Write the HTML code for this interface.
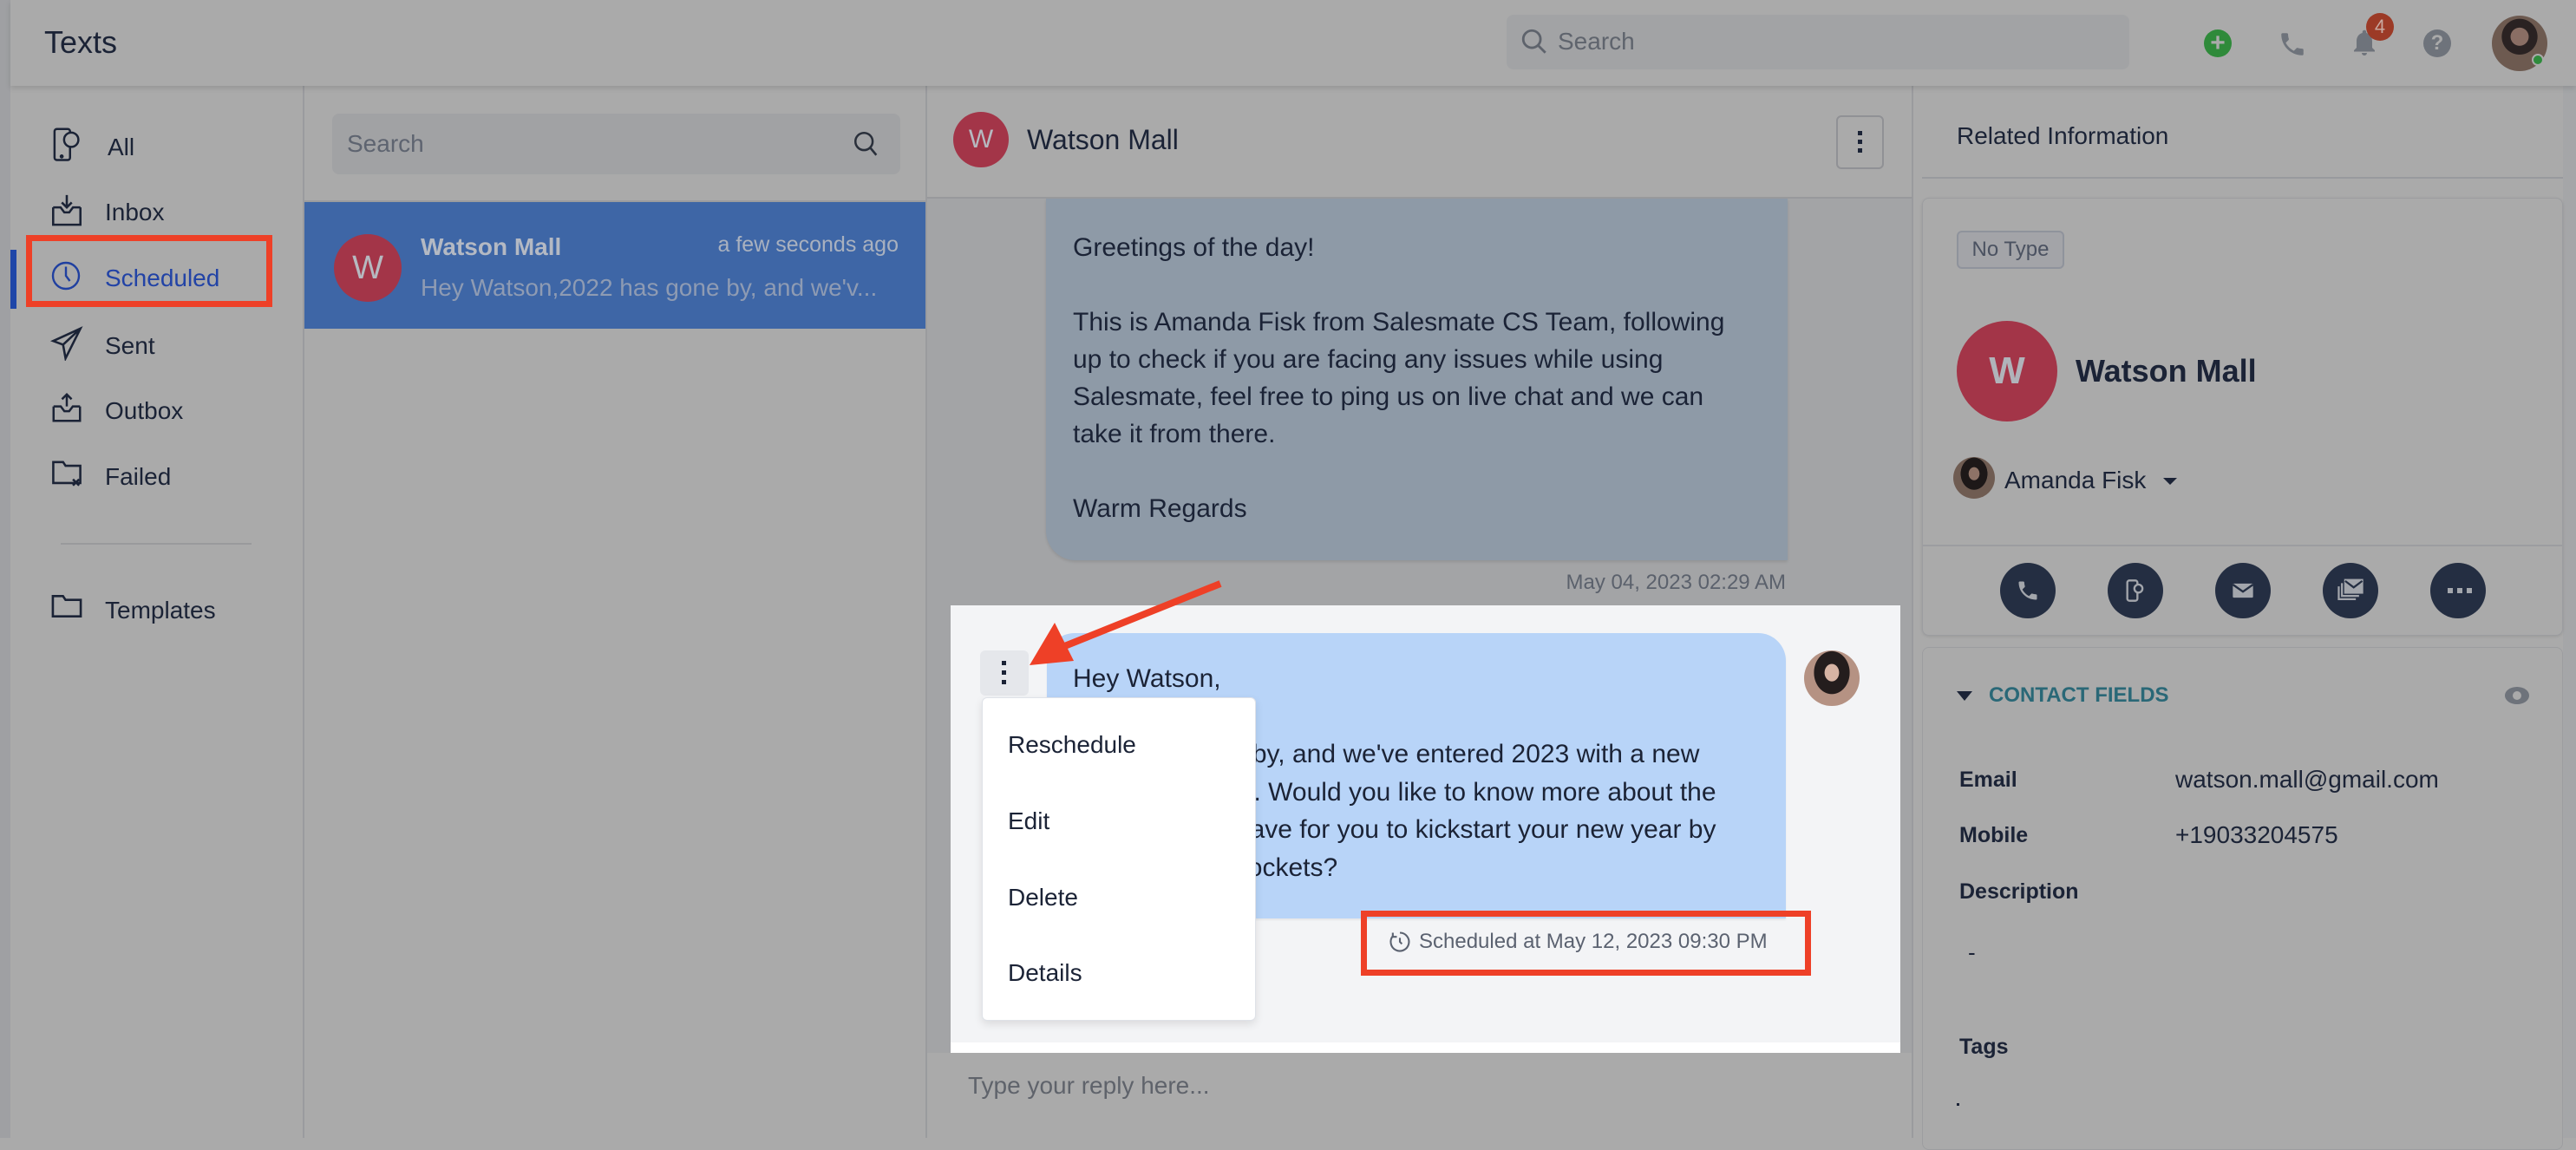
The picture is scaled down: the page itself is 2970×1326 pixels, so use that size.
<!DOCTYPE html>
<html><head><meta charset="utf-8"><style>
*{margin:0;padding:0;box-sizing:border-box}
body{width:2970px;height:1312px;overflow:hidden;background:#aaaaaa;font-family:"Liberation Sans",sans-serif;color:#1b2336;position:relative}
.a{position:absolute}
.t{position:absolute;white-space:nowrap;line-height:1}
</style></head><body>
<!-- left strip -->
<div class="a" style="left:0;top:0;width:12px;height:1312px;background:#9fa0a3"></div>
<!-- header -->
<div class="a" style="left:12px;top:0;width:2958px;height:99px;background:#aaaaaa;box-shadow:0 3px 6px rgba(0,0,0,.12);z-index:2"></div>
<div class="t" style="left:51px;top:31px;font-size:36px;z-index:3">Texts</div>
<div class="a" style="left:1737px;top:17px;width:718px;height:63px;background:#a2a3a5;border-radius:8px;z-index:3"></div>
<svg class="a" style="left:1752px;top:31px;z-index:4" width="34" height="34" viewBox="0 0 24 24" fill="none" stroke="#5e636c" stroke-width="2"><circle cx="10" cy="10" r="7"/><path d="M15 15l6 6"/></svg>
<div class="t" style="left:1796px;top:34px;font-size:28px;color:#5f646d;z-index:4">Search</div>
<div class="a" style="left:2541px;top:34px;width:32px;height:32px;border-radius:50%;background:#2f8a3a;z-index:4;color:#aaa;font-size:30px;line-height:32px;text-align:center;font-weight:bold">+</div>
<svg class="a" style="left:2626px;top:34px;z-index:4" width="34" height="34" viewBox="0 0 24 24"><path d="M6.6 10.8c1.4 2.8 3.8 5.1 6.6 6.6l2.2-2.2c.3-.3.7-.4 1-.2 1.1.4 2.3.6 3.6.6.6 0 1 .4 1 1V20c0 .6-.4 1-1 1C10.6 21 3 13.4 3 4c0-.6.4-1 1-1h3.5c.6 0 1 .4 1 1 0 1.2.2 2.4.6 3.6.1.3 0 .7-.2 1z" fill="#6e737b"/></svg>
<svg class="a" style="left:2708px;top:30px;z-index:4" width="36" height="38" viewBox="0 0 24 24"><path d="M12 22a2 2 0 002-2h-4a2 2 0 002 2zm6-6V11c0-3.1-1.6-5.6-4.5-6.3V4a1.5 1.5 0 00-3 0v.7C7.6 5.4 6 7.9 6 11v5l-2 2v1h16v-1z" fill="#6e737b"/></svg>
<div class="a" style="left:2728px;top:15px;width:32px;height:32px;border-radius:50%;background:#9c3a26;color:#c8a89f;font-size:22px;line-height:32px;text-align:center;z-index:5">4</div>
<div class="a" style="left:2794px;top:34px;width:32px;height:32px;border-radius:50%;background:#6e737b;color:#aaa;font-size:24px;line-height:32px;text-align:center;font-weight:bold;z-index:4">?</div>
<div class="a" style="left:2873px;top:18px;width:64px;height:64px;border-radius:50%;background:radial-gradient(circle at 50% 38%,#8a6e64 0 20%,#2a2222 21% 40%,#6d5a50 41%),#5a4a44;z-index:4"></div>
<div class="a" style="left:2919px;top:62px;width:14px;height:14px;border-radius:50%;background:#2e8b3c;border:2px solid #aaa;z-index:5"></div>

<!-- sidebar -->
<div class="a" style="left:349px;top:99px;width:2px;height:1213px;background:#9a9b9e"></div>
<div class="a" style="left:12px;top:288px;width:7px;height:68px;background:#1f46a8"></div>
<div class="a" style="left:30px;top:271px;width:284px;height:83px;border:7px solid #ee4027"></div>
<svg class="a" style="left:58px;top:146px" width="40" height="44" viewBox="0 0 28 32" fill="none" stroke="#1b2336" stroke-width="1.8"><rect x="3" y="2" width="13" height="26" rx="2"/><circle cx="17" cy="11" r="6" fill="#aaa"/><circle cx="9" cy="25" r=".8"/></svg>
<div class="t" style="left:124px;top:156px;font-size:28px">All</div>
<svg class="a" style="left:58px;top:222px" width="38" height="40" viewBox="0 0 26 28" fill="none" stroke="#1b2336" stroke-width="1.8"><path d="M2 12v14h22V12M2 12h6l3 4h4l3-4h6M13 2v10M9 8l4 4 4-4"/></svg>
<div class="t" style="left:121px;top:231px;font-size:28px">Inbox</div>
<svg class="a" style="left:58px;top:298px" width="36" height="40" viewBox="0 0 24 26" fill="none" stroke="#2040a0" stroke-width="1.6"><circle cx="12" cy="13" r="10"/><path d="M12 6v7l3 4"/></svg>
<div class="t" style="left:121px;top:307px;font-size:28px;color:#2243a6">Scheduled</div>
<svg class="a" style="left:58px;top:376px" width="38" height="40" viewBox="0 0 26 28" fill="none" stroke="#1b2336" stroke-width="1.8"><path d="M24 2L2 12l8 3 2 11zM10 15L24 2"/></svg>
<div class="t" style="left:121px;top:385px;font-size:28px">Sent</div>
<svg class="a" style="left:58px;top:452px" width="38" height="36" viewBox="0 0 26 26" fill="none" stroke="#1b2336" stroke-width="1.8"><path d="M2 12v12h22V12M2 12h6l3 4h4l3-4h6M13 12V2M9 6l4-4 4 4"/></svg>
<div class="t" style="left:121px;top:460px;font-size:28px">Outbox</div>
<svg class="a" style="left:58px;top:530px" width="38" height="34" viewBox="0 0 26 24" fill="none" stroke="#1b2336" stroke-width="1.8"><path d="M2 2h8l2 3h12v14H2zM18 16l5 5M23 16l-5 5"/></svg>
<div class="t" style="left:121px;top:536px;font-size:28px">Failed</div>
<div class="a" style="left:70px;top:626px;width:220px;height:2px;background:#999a9c"></div>
<svg class="a" style="left:58px;top:684px" width="38" height="30" viewBox="0 0 26 20" fill="none" stroke="#1b2336" stroke-width="1.8"><path d="M2 2h8l2 3h12v13H2z"/></svg>
<div class="t" style="left:121px;top:690px;font-size:28px">Templates</div>

<!-- list pane -->
<div class="a" style="left:1067px;top:99px;width:2px;height:1213px;background:#9a9b9e"></div>
<div class="a" style="left:383px;top:131px;width:655px;height:70px;background:#a1a2a4;border-radius:8px"></div>
<div class="t" style="left:400px;top:152px;font-size:28px;color:#5e6470">Search</div>
<svg class="a" style="left:982px;top:148px" width="34" height="36" viewBox="0 0 24 24" fill="none" stroke="#2a303b" stroke-width="1.8"><circle cx="10" cy="10" r="7"/><path d="M15 15l5 6"/></svg>
<div class="a" style="left:351px;top:231px;width:716px;height:2px;background:#9b9c9e"></div>
<div class="a" style="left:351px;top:233px;width:716px;height:146px;background:#3e66a6"></div>
<div class="a" style="left:385px;top:270px;width:78px;height:78px;border-radius:50%;background:#a33548;color:#b6b9c0;font-size:38px;line-height:78px;text-align:center">W</div>
<div class="t" style="left:485px;top:271px;font-size:28px;color:#b4b9c3;font-weight:bold">Watson Mall</div>
<div class="t" style="right:1934px;top:270px;font-size:25px;color:#a9b1bf">a few seconds ago</div>
<div class="t" style="left:485px;top:318px;font-size:28px;color:#8e9bb3">Hey Watson,2022 has gone by, and we'v...</div>

<!-- chat pane -->
<div class="a" style="left:1069px;top:229px;width:1136px;height:985px;background:#a3a4a6"></div>
<div class="a" style="left:2204px;top:99px;width:2px;height:1213px;background:#9a9b9e"></div>
<div class="a" style="left:1099px;top:129px;width:64px;height:64px;border-radius:50%;background:#a33548;color:#b6b9c0;font-size:30px;line-height:64px;text-align:center">W</div>
<div class="t" style="left:1184px;top:145px;font-size:32px">Watson Mall</div>
<div class="a" style="left:2117px;top:133px;width:55px;height:62px;border:2px solid #909195;border-radius:6px"></div>
<div class="a" style="left:2142px;top:151px;width:5px;height:5px;background:#1b2336;box-shadow:0 10px 0 #1b2336,0 20px 0 #1b2336"></div>
<div class="a" style="left:1206px;top:229px;width:855px;height:417px;background:#8e9aa7;border-radius:0 0 0 34px;box-shadow:0 2px 3px rgba(0,0,0,.1)"></div>
<div class="a" style="left:1069px;top:227px;width:1136px;height:2px;background:#98999c"></div>
<div style="position:absolute;left:1237px;top:264px;font-size:30px;line-height:43px;color:#1b2336">Greetings of the day!<br><br>This is Amanda Fisk from Salesmate CS Team, following<br>up to check if you are facing any issues while using<br>Salesmate, feel free to ping us on live chat and we can<br>take it from there.<br><br>Warm Regards</div>
<div class="t" style="right:911px;top:660px;font-size:24px;color:#5b616c">May 04, 2023 02:29 AM</div>

<!-- highlight -->
<div class="a" style="left:1096px;top:698px;width:1095px;height:516px;background:#f3f4f6"></div>
<div class="a" style="left:1096px;top:1202px;width:1095px;height:12px;background:#fff"></div>
<div class="a" style="left:1207px;top:730px;width:852px;height:329px;background:#b8d4f8;border-radius:32px 32px 0 0;box-shadow:0 2px 2px rgba(0,0,0,.06)"></div>
<div style="position:absolute;left:1237px;top:761px;font-size:30px;line-height:43.5px;color:#1b2336;white-space:nowrap">Hey Watson,<br><br>2022 has gone by, and we've entered 2023 with a new<br>year, new goals. Would you like to know more about the<br>offers that we have for you to kickstart your new year by<br>filling up your pockets?</div>
<div class="a" style="left:2080px;top:750px;width:64px;height:64px;border-radius:50%;background:radial-gradient(ellipse at 50% 40%,#d7b4a4 0 18%,#241d1d 19% 45%,#b59283 46%),#8a6f66"></div>
<div class="a" style="left:1130px;top:750px;width:56px;height:52px;background:#e5e7eb;border-radius:6px"></div>
<div class="a" style="left:1155px;top:762px;width:5px;height:5px;background:#1b2336;box-shadow:0 11px 0 #1b2336,0 22px 0 #1b2336"></div>
<div class="a" style="left:1132px;top:804px;width:316px;height:373px;background:#fff;border:1px solid #dfe2e8;border-radius:6px;box-shadow:0 4px 10px rgba(0,0,0,.1)"></div>
<div class="t" style="left:1162px;top:845px;font-size:28px">Reschedule</div>
<div class="t" style="left:1162px;top:933px;font-size:28px">Edit</div>
<div class="t" style="left:1162px;top:1021px;font-size:28px">Delete</div>
<div class="t" style="left:1162px;top:1108px;font-size:28px">Details</div>
<div class="a" style="left:1569px;top:1050px;width:519px;height:75px;border:7px solid #ee4027"></div>
<svg class="a" style="left:1600px;top:1072px" width="28" height="28" viewBox="0 0 24 24" fill="none" stroke="#5b6270" stroke-width="1.8"><path d="M12 3a9 9 0 11-7 3.3"/><path d="M12 8v4l2 2M5 3v4h4"/></svg>
<div class="t" style="left:1636px;top:1074px;font-size:24px;color:#5b6270">Scheduled at May 12, 2023 09:30 PM</div>
<!-- arrow -->
<svg class="a" style="left:1150px;top:660px" width="270" height="130" viewBox="0 0 270 130"><path d="M257 13L60 92" stroke="#ee4027" stroke-width="8"/><path d="M37 107L66 58L88 102Z" fill="#ee4027"/></svg>

<div class="t" style="left:1116px;top:1238px;font-size:28px;color:#5f636b">Type your reply here...</div>

<!-- right pane -->
<div class="a" style="left:2955px;top:99px;width:15px;height:1213px;background:#a5a6a8"></div>
<div class="t" style="left:2256px;top:143px;font-size:28px;font-weight:500">Related Information</div>
<div class="a" style="left:2216px;top:204px;width:739px;height:2px;background:#989a9e"></div>
<div class="a" style="left:2216px;top:228px;width:739px;height:505px;background:#aaaaaa;border:1px solid #9c9da0;border-radius:8px;box-shadow:0 1px 3px rgba(0,0,0,.1)"></div>
<div class="a" style="left:2256px;top:266px;width:124px;height:44px;border:2px solid #8f939c;border-radius:6px;background:#a3a4a8;color:#4b5261;font-size:24px;line-height:40px;text-align:center">No Type</div>
<div class="a" style="left:2256px;top:370px;width:116px;height:116px;border-radius:50%;background:#a33548;color:#b0b3ba;font-size:44px;line-height:116px;text-align:center;font-weight:bold">W</div>
<div class="t" style="left:2393px;top:410px;font-size:36px;font-weight:bold">Watson Mall</div>
<div class="a" style="left:2252px;top:527px;width:48px;height:48px;border-radius:50%;background:radial-gradient(ellipse at 50% 40%,#8e7367 0 18%,#1d1818 19% 45%,#6f5c52 46%)"></div>
<div class="t" style="left:2311px;top:540px;font-size:28px">Amanda Fisk</div>
<div class="a" style="left:2494px;top:551px;width:0;height:0;border-left:8px solid transparent;border-right:8px solid transparent;border-top:8px solid #1b2336"></div>
<div class="a" style="left:2216px;top:628px;width:739px;height:2px;background:#9c9da0"></div>
<div class="a" style="left:2306px;top:649px;width:64px;height:64px;border-radius:50%;background:#242e42"></div>
<div class="a" style="left:2430px;top:649px;width:64px;height:64px;border-radius:50%;background:#242e42"></div>
<div class="a" style="left:2554px;top:649px;width:64px;height:64px;border-radius:50%;background:#242e42"></div>
<div class="a" style="left:2678px;top:649px;width:64px;height:64px;border-radius:50%;background:#242e42"></div>
<div class="a" style="left:2802px;top:649px;width:64px;height:64px;border-radius:50%;background:#242e42"></div>
<svg class="a" style="left:2324px;top:667px" width="28" height="28" viewBox="0 0 24 24"><path d="M6.6 10.8c1.4 2.8 3.8 5.1 6.6 6.6l2.2-2.2c.3-.3.7-.4 1-.2 1.1.4 2.3.6 3.6.6.6 0 1 .4 1 1V20c0 .6-.4 1-1 1C10.6 21 3 13.4 3 4c0-.6.4-1 1-1h3.5c.6 0 1 .4 1 1 0 1.2.2 2.4.6 3.6.1.3 0 .7-.2 1z" fill="#a3a6ac"/></svg>
<svg class="a" style="left:2448px;top:667px" width="28" height="28" viewBox="0 0 24 24" fill="none" stroke="#a3a6ac" stroke-width="2"><rect x="4" y="2" width="10" height="20" rx="2"/><circle cx="15" cy="10" r="4" fill="#242e42"/></svg>
<svg class="a" style="left:2572px;top:669px" width="28" height="24" viewBox="0 0 24 20"><rect x="2" y="3" width="20" height="14" rx="1" fill="#a3a6ac"/><path d="M2 4l10 7 10-7" stroke="#242e42" stroke-width="2" fill="none"/></svg>
<svg class="a" style="left:2694px;top:666px" width="32" height="30" viewBox="0 0 26 24" fill="none" stroke="#a3a6ac" stroke-width="1.8"><rect x="8" y="2" width="16" height="12" fill="#a3a6ac"/><path d="M8 3l8 6 8-6" stroke="#242e42"/><path d="M5 5v12h16M2 8v12h16"/></svg>
<div class="a" style="left:2822px;top:678px;width:6px;height:6px;background:#a3a6ac;box-shadow:11px 0 0 #a3a6ac,22px 0 0 #a3a6ac"></div>
<div class="a" style="left:2216px;top:746px;width:739px;height:580px;background:#aaaaaa;border:1px solid #9c9da0;border-radius:8px"></div>
<div class="a" style="left:2256px;top:797px;width:0;height:0;border-left:9px solid transparent;border-right:9px solid transparent;border-top:11px solid #1b2336"></div>
<div class="t" style="left:2293px;top:790px;font-size:24px;font-weight:bold;color:#2a6877">CONTACT FIELDS</div>
<div class="a" style="left:2888px;top:792px;width:28px;height:20px;border-radius:50%;background:#6e737b"></div>
<div class="a" style="left:2897px;top:797px;width:10px;height:10px;border-radius:50%;background:#aaa"></div>
<div class="t" style="left:2259px;top:887px;font-size:25px;font-weight:bold">Email</div>
<div class="t" style="left:2508px;top:885px;font-size:28px">watson.mall@gmail.com</div>
<div class="t" style="left:2259px;top:951px;font-size:25px;font-weight:bold">Mobile</div>
<div class="t" style="left:2508px;top:949px;font-size:28px">+19033204575</div>
<div class="t" style="left:2259px;top:1016px;font-size:25px;font-weight:bold">Description</div>
<div class="t" style="left:2269px;top:1085px;font-size:26px">-</div>
<div class="t" style="left:2259px;top:1195px;font-size:25px;font-weight:bold">Tags</div>
<div class="a" style="left:2256px;top:1272px;width:3px;height:3px;background:#1b2336"></div>
</body></html>
